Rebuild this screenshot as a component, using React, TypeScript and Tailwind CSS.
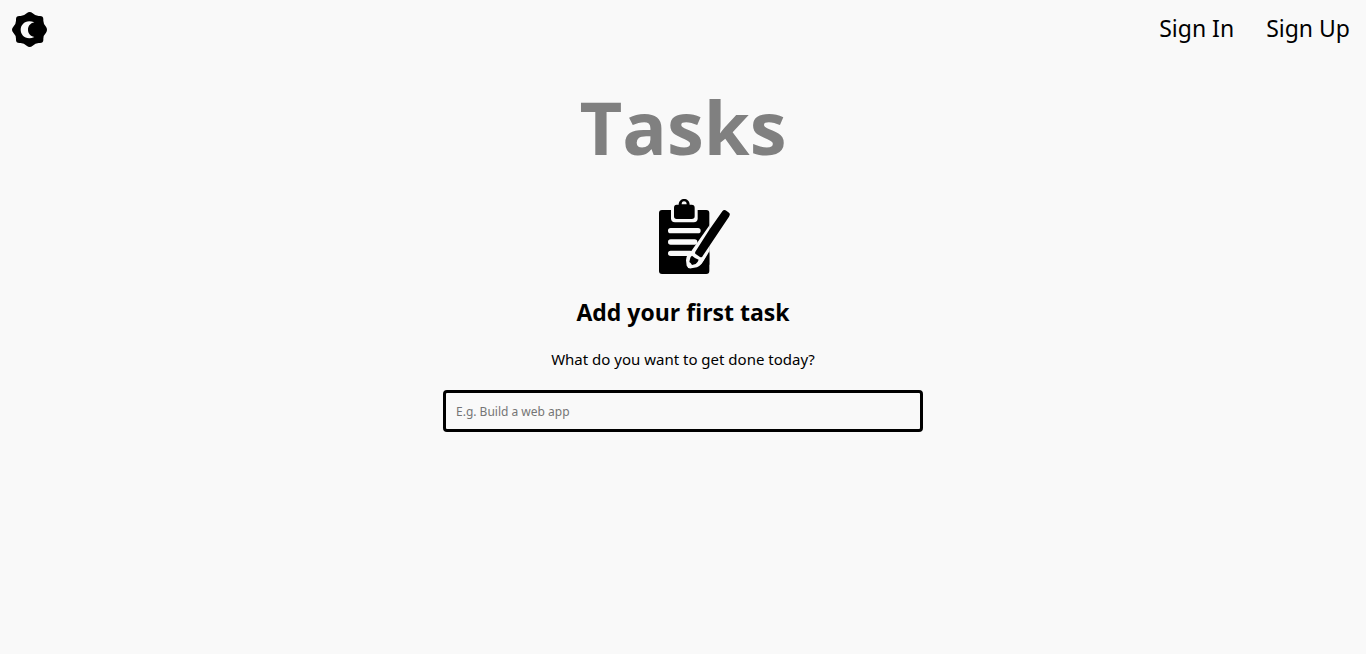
import { useState } from "react";

function ThemeIcon() {
  return (
    <svg viewBox="0 0 108 108" className="size-9" aria-hidden="true">
      <path
        fill="#000"
        d="M44 4Q53 -4 62 4Q70 12 80 12H84Q94 12 94 22V26Q94 36 102 44Q108 53 102 62Q94 70 94 80V84Q94 93 84 93H80Q70 93 62 101Q53 109 44 101Q36 93 26 93H22Q12 93 12 84V80Q12 70 4 62Q-4 53 4 44Q12 36 12 26V22Q12 12 22 12H26Q36 12 44 4Z"
      />
      <path fill="#f9f9f9" d="M67 31C43 20 26 36 26 53C26 70 43 86 67 75C54 72 48 63 48 53C48 43 54 34 67 31Z" />
    </svg>
  );
}

function ClipboardIcon() {
  return (
    <svg viewBox="-21 0 300 270" className="h-[90px] w-[100px]" aria-hidden="true">
      <rect x="57" y="60" width="151" height="192" rx="9" fill="#000" />
      <path d="M93 54H173V85Q173 97 161 97H105Q93 97 93 85Z" fill="#f9f9f9" />
      <path
        fill="#000"
        fillRule="evenodd"
        d="M110 44H116C116 21 149 21 149 44H155Q164 44 164 53V79Q164 87 155 87H110Q102 87 102 79V53Q102 44 110 44ZM125 43H140Q140 34 132 34Q125 34 125 43Z"
      />
      <path d="M92 122H174M92 156H164M92 190H150" stroke="#f9f9f9" strokeWidth="16" strokeLinecap="round" />
      <path d="M209 105L154 183Q140 190 138 211L140 227Q144 237 154 235L171 232Q185 226 195 208L209 188Z" fill="#f9f9f9" />
      <path d="M208 184L194 208L184 224H208Z" fill="#000" />
      <path d="M208 119L247 64Q252 57 259 62L267 68Q272 72 267 80L188 198Q186 204 180 201L168 193Q163 190 167 184Z" fill="#000" />
      <path d="M156 197Q151 200 150 207L148 216Q153 219 156 225L167 222Q173 218 176 209Q167 207 156 197Z" fill="#000" />
    </svg>
  );
}

export default function App() {
  const [task, setTask] = useState("");
  return (
    <div className="min-h-screen bg-[#f9f9f9] font-['Noto_Sans','Open_Sans',sans-serif] text-black">
      <header className="flex items-start justify-between pt-3 pr-4 pl-3">
        <button type="button" aria-label="Toggle theme">
          <ThemeIcon />
        </button>
        <nav className="flex gap-8 text-[23px] leading-8">
          <a href="#sign-in">Sign In</a>
          <a href="#sign-up">Sign Up</a>
        </nav>
      </header>
      <main className="flex flex-col items-center px-4 pt-6">
        <h1 className="font-['Open_Sans','Noto_Sans',sans-serif] text-[74px] leading-[110px] font-bold text-[#808080]">
          Tasks
        </h1>
        <div className="pt-2">
          <ClipboardIcon />
        </div>
        <h2 className="pt-4 font-['Open_Sans','Noto_Sans',sans-serif] text-[23px] leading-8 font-bold">
          Add your first task
        </h2>
        <label htmlFor="task" className="pt-[19px] text-[15px] leading-6">
          What do you want to get done today?
        </label>
        <input
          id="task"
          type="text"
          value={task}
          onChange={(event) => setTask(event.target.value)}
          placeholder="E.g. Build a web app"
          className="mt-[19px] h-[42px] w-full max-w-[480px] rounded-[4px] border-3 border-black bg-transparent px-[10px] text-[12px] outline-none placeholder:text-[#757575]"
        />
      </main>
    </div>
  );
}
